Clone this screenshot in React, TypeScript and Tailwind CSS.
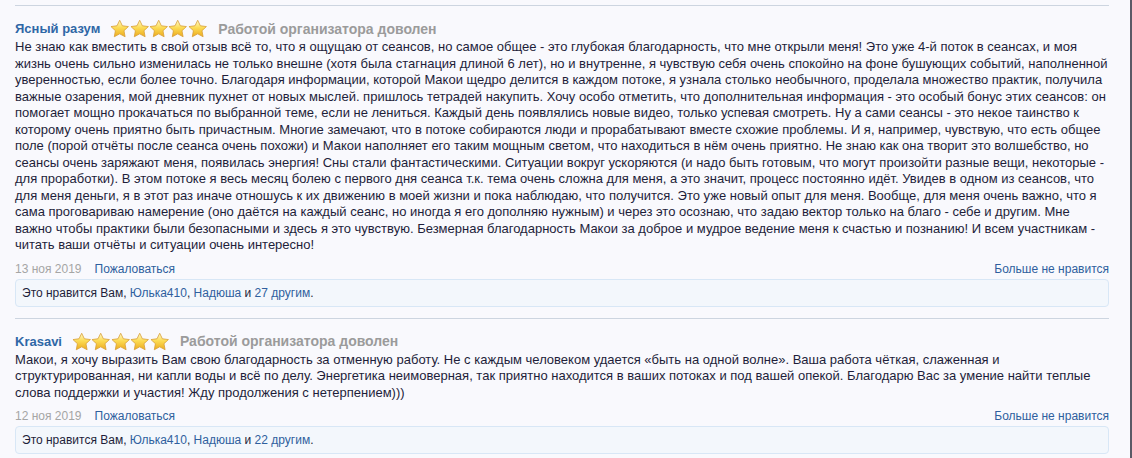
import React from 'react';

interface Review {
  name: string;
  text: string;
  date: string;
  likes: number;
}

const reviews: Review[] = [
  {
    name: 'Ясный разум',
    date: '13 ноя 2019',
    likes: 27,
    text:
      'Не знаю как вместить в свой отзыв всё то, что я ощущаю от сеансов, но самое общее - это глубокая благодарность, что мне открыли меня! Это уже 4-й поток в сеансах, и моя жизнь очень сильно изменилась не только внешне (хотя была стагнация длиной 6 лет), но и внутренне, я чувствую себя очень спокойно на фоне бушующих событий, наполненной уверенностью, если более точно. Благодаря информации, которой Макои щедро делится в каждом потоке, я узнала столько необычного, проделала множество практик, получила важные озарения, мой дневник пухнет от новых мыслей. пришлось тетрадей накупить. Хочу особо отметить, что дополнительная информация - это особый бонус этих сеансов: он помогает мощно прокачаться по выбранной теме, если не лениться. Каждый день появлялись новые видео, только успевая смотреть. Ну а сами сеансы - это некое таинство к которому очень приятно быть причастным. Многие замечают, что в потоке собираются люди и прорабатывают вместе схожие проблемы. И я, например, чувствую, что есть общее поле (порой отчёты после сеанса очень похожи) и Макои наполняет его таким мощным светом, что находиться в нём очень приятно. Не знаю как она творит это волшебство, но сеансы очень заряжают меня, появилась энергия! Сны стали фантастическими. Ситуации вокруг ускоряются (и надо быть готовым, что могут произойти разные вещи, некоторые - для проработки). В этом потоке я весь месяц болею с первого дня сеанса т.к. тема очень сложна для меня, а это значит, процесс постоянно идёт. Увидев в одном из сеансов, что для меня деньги, я в этот раз иначе отношусь к их движению в моей жизни и пока наблюдаю, что получится. Это уже новый опыт для меня. Вообще, для меня очень важно, что я сама проговариваю намерение (оно даётся на каждый сеанс, но иногда я его дополняю нужным) и через это осознаю, что задаю вектор только на благо - себе и другим. Мне важно чтобы практики были безопасными и здесь я это чувствую. Безмерная благодарность Макои за доброе и мудрое ведение меня к счастью и познанию! И всем участникам - читать ваши отчёты и ситуации очень интересно!',
  },
  {
    name: 'Krasavi',
    date: '12 ноя 2019',
    likes: 22,
    text:
      'Макои, я хочу выразить Вам свою благодарность за отменную работу. Не с каждым человеком удается «быть на одной волне». Ваша работа чёткая, слаженная и структурированная, ни капли воды и всё по делу. Энергетика неимоверная, так приятно находится в ваших потоках и под вашей опекой. Благодарю Вас за умение найти теплые слова поддержки и участия! Жду продолжения с нетерпением)))',
  },
];

const Star = () => (
  <svg width="19.4" height="20" viewBox="0 0 24 24">
    <defs>
      <linearGradient id="starFill" x1="0" y1="0" x2="0" y2="1">
        <stop offset="0" stopColor="#fffbd0" />
        <stop offset="0.45" stopColor="#fcdc55" />
        <stop offset="1" stopColor="#ecab1f" />
      </linearGradient>
    </defs>
    <path
      d="M12 1.2l3.3 6.8 7.5 1-5.5 5.1 1.4 7.5L12 18l-6.7 3.6 1.4-7.5L1.2 9l7.5-1z"
      fill="url(#starFill)"
      stroke="#d89f38"
      strokeWidth="1"
      strokeLinejoin="round"
    />
  </svg>
);

const ReviewItem = ({ review }: { review: Review }) => (
  <div className="border-t border-[#cdd5e0] pt-[13px] pb-[11px]">
    <div className="flex items-center h-[20px]">
      <span className="text-[13px] font-bold text-[#2f67a6]">{review.name}</span>
      <span className="flex items-center ml-[10px] mr-[11px]">
        {[0, 1, 2, 3, 4].map(i => <Star key={i} />)}
      </span>
      <span className="text-[14px] font-bold text-[#9b9b9b]">Работой организатора доволен</span>
    </div>
    <p className="text-[13px] leading-[16.5px] text-[#1e1e3a]">{review.text}</p>
    <div className="flex items-center justify-between text-[12px] leading-[18px] mt-[6px]">
      <div>
        <span className="text-[#a5a5a5]">{review.date}</span>
        <a className="ml-[13px] text-[#2f5f9e] cursor-pointer">Пожаловаться</a>
      </div>
      <a className="text-[#2f5f9e] cursor-pointer">Больше не нравится</a>
    </div>
    <div className="mt-[1px] h-[28px] flex items-center px-[6px] bg-[#f3f7fc] border border-[#d8e7f6] rounded-[4px] text-[12px] text-[#1e1e3a]">
      Это нравится Вам,&nbsp;<a className="text-[#2f5f9e]">Юлька410</a>,&nbsp;
      <a className="text-[#2f5f9e]">Надюша</a>&nbsp;и&nbsp;
      <a className="text-[#2f5f9e]">{review.likes} другим</a>.
    </div>
  </div>
);

export default function App() {
  return (
    <div
      className="w-[1132px] h-[458px] overflow-hidden bg-[#f9f9fd] border-r-2 border-[#5a5a66]"
      style={{ fontFamily: '"Liberation Sans", Arial, sans-serif' }}
    >
      <div className="ml-[15px] w-[1094px] pt-[5px]">
        {reviews.map(r => (
          <ReviewItem key={r.name} review={r} />
        ))}
        <div className="border-t border-[#cdd5e0]" />
      </div>
    </div>
  );
}
